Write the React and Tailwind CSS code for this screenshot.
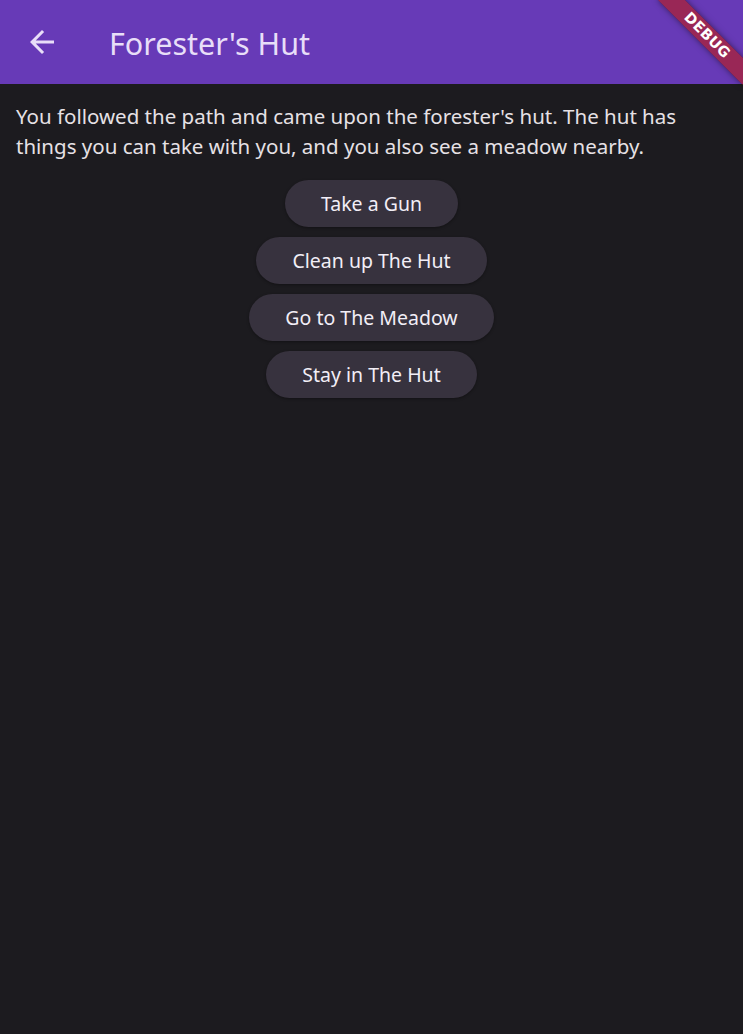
import { useState } from "react";

const choices = ["Take a Gun", "Clean up The Hut", "Go to The Meadow", "Stay in The Hut"];

const BackArrow = () => (
  <svg viewBox="0 0 24 24" className="w-9 h-9" fill="currentColor">
    <path d="M20 11H7.83l5.59-5.59L12 4l-8 8 8 8 1.41-1.41L7.83 13H20v-2z" />
  </svg>
);

const DebugBanner = () => (
  <div className="absolute inset-0 overflow-hidden pointer-events-none">
    <div
      className="absolute left-[647px] top-[26px] w-[120px] h-[19px] rotate-45 bg-[#b71c1ca0] flex items-center justify-center shadow-[0_0_6px_rgba(0,0,0,0.5)]"
    >
      <span className="text-white text-[14.5px] font-black leading-none tracking-[0.3px] font-['DejaVu_Sans',sans-serif]">DEBUG</span>
    </div>
  </div>
);

export default function App() {
  const [picked, setPicked] = useState(null);

  return (
    <div className="w-[743px] h-[1034px] bg-[#1c1b1f] font-['Noto_Sans',sans-serif] relative overflow-hidden">
      <header className="h-[84px] bg-[#673ab7] flex items-center text-[#e8def8]">
        <button className="ml-6 w-9 h-9 flex items-center justify-center">
          <BackArrow />
        </button>
        <h1 className="ml-[49px] mt-[3px] text-[30.5px] leading-none">Forester's Hut</h1>
      </header>

      <p className="px-4 pt-[17px] text-[20.5px] leading-[30px] text-[#e6e1e5]">
        You followed the path and came upon the forester's hut. The hut has things you can take with you, and you also see a meadow nearby.
      </p>

      <div className="flex flex-col items-center gap-[10px] mt-[19px]">
        {choices.map((c) => (
          <button
            key={c}
            onClick={() => setPicked(c)}
            className="h-[47px] px-9 rounded-full bg-[#37323e] text-[#f2eef6] text-[19.5px] shadow-[0_1px_3px_rgba(0,0,0,0.35)]"
          >
            {c}
          </button>
        ))}
      </div>

      <DebugBanner />
    </div>
  );
}
